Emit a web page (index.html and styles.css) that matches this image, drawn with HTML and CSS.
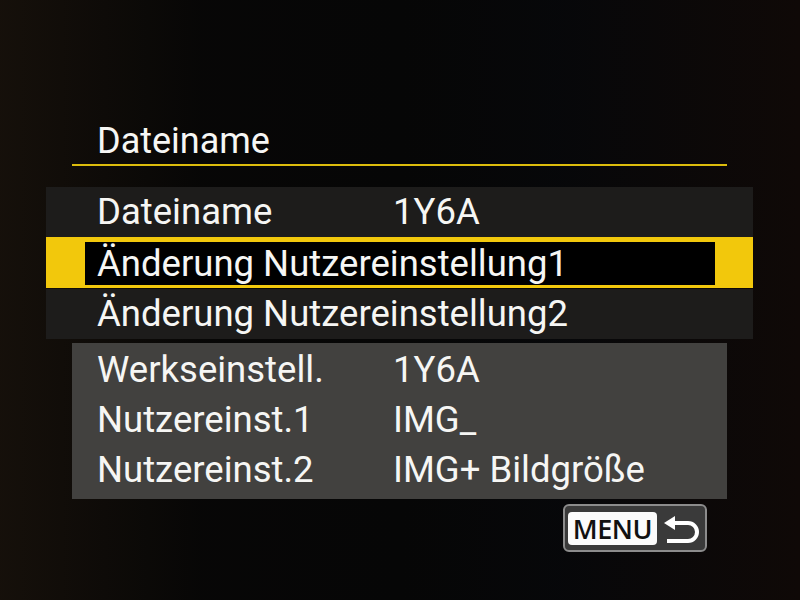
FILE: index.html
```html
<!DOCTYPE html>
<html lang="de">
<head>
<meta charset="UTF-8">
<meta name="viewport" content="width=device-width, initial-scale=1.0">
<title>Dateiname</title>
<link rel="stylesheet" href="styles.css">
</head>
<body>
<div class="screen">
  <div class="menu">
    <h1 class="title">Dateiname</h1>

    <div class="row">
      <span class="label">Dateiname</span>
      <span class="value">1Y6A</span>
    </div>
    <div class="row selected">
      <span class="label">Änderung Nutzereinstellung1</span>
    </div>
    <div class="row">
      <span class="label">Änderung Nutzereinstellung2</span>
    </div>

    <div class="info">
      <span class="label">Werkseinstell.</span>
      <span class="value">1Y6A</span>
      <span class="label">Nutzereinst.1</span>
      <span class="value">IMG_</span>
      <span class="label">Nutzereinst.2</span>
      <span class="value">IMG+ Bildgröße</span>
    </div>

    <div class="footer">
      <div class="menu-btn">
        <span class="menu-label">MENU</span>
        <svg class="back-icon" width="40" height="34" viewBox="0 0 40 34">
          <path d="M14 5 L3 12 L14 19 Z" fill="#fff"/>
          <path d="M12 12 H27 a9 9 0 0 1 0 18 H6" fill="none" stroke="#fff" stroke-width="4"/>
        </svg>
      </div>
    </div>
  </div>
</div>
</body>
</html>
```

FILE: styles.css
```css
html, body {
  margin: 0;
  padding: 0;
}

body {
  width: 800px;
  height: 600px;
  overflow: hidden;
  font-family: Roboto, "Liberation Sans", sans-serif;
  color: #f6f6f4;
  background-color: #060606;
  background-image:
    linear-gradient(90deg, rgba(28, 20, 12, 0.7) 0%, rgba(10, 8, 6, 0.3) 25%, rgba(0, 0, 0, 0) 50%, rgba(8, 10, 16, 0.35) 70%, rgba(24, 12, 8, 0.5) 100%);
}

.screen {
  padding-top: 118px;
}

.menu {
  margin-left: 46px;
  width: 707px;
}

.title {
  margin: 0 26px 21px 26px;
  padding-left: 25px;
  font-size: 36px;
  font-weight: normal;
  line-height: 46px;
  border-bottom: 2px solid #dcbc0c;
  height: 46px;
}

.row {
  display: grid;
  grid-template-columns: 296px 1fr;
  height: 50px;
  padding-left: 51px;
  background-color: #1d1c1b;
  font-size: 36.5px;
  line-height: 50px;
  white-space: nowrap;
}

.row.selected {
  height: 43px;
  line-height: 43px;
  padding-left: 12px;
  margin-bottom: 1px;
  border-style: solid;
  border-color: #f2c80c;
  border-width: 5px 38px 3px 39px;
  background-color: #000;
  display: block;
}

.info {
  display: grid;
  grid-template-columns: 296px 1fr;
  margin: 4px 26px 0 26px;
  padding: 2px 0 4px 25px;
  background-color: #42413f;
  font-size: 36.5px;
  line-height: 50px;
  white-space: nowrap;
}

.footer {
  display: flex;
  justify-content: flex-end;
  padding-top: 5px;
  padding-right: 46px;
}

.menu-btn {
  display: flex;
  align-items: center;
  gap: 4px;
  height: 44px;
  padding: 0 4px 0 3px;
  border: 2px solid #8c8c8c;
  border-radius: 6px;
  background-color: #3a3a3a;
}

.menu-label {
  background-color: #fbfbfb;
  color: #111;
  border-radius: 4px;
  padding: 0 5px;
  height: 33px;
  line-height: 34px;
  font-size: 27px;
  font-weight: 600;
  font-family: "Open Sans", sans-serif;
  letter-spacing: -0.5px;
}

.back-icon {
  display: block;
}
```
